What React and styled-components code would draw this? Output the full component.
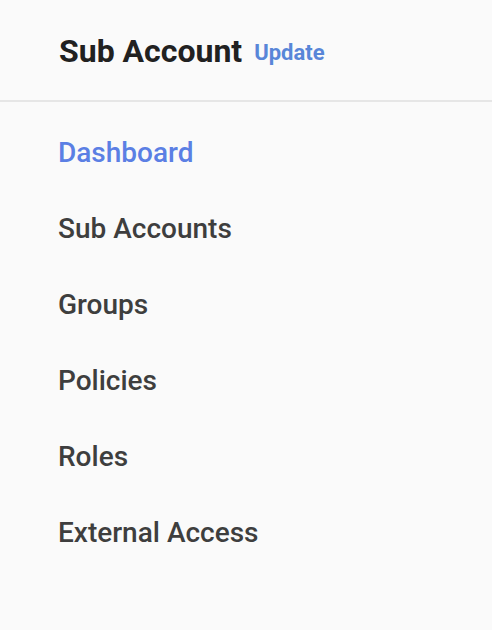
import styled, { createGlobalStyle } from 'styled-components';

const GlobalStyle = createGlobalStyle`
  html, body {
    margin: 0;
    padding: 0;
    background: #fafafa;
    font-family: Roboto, "Liberation Sans", sans-serif;
  }
`;

const Sidebar = styled.aside`
  width: 492px;
  min-height: 630px;
  background: #fafafa;
`;

const Header = styled.header`
  display: flex;
  align-items: flex-start;
  gap: 12px;
  height: 102px;
  box-sizing: border-box;
  padding: 32px 59px 0;
  border-bottom: 2px solid #e6e6e6;

  > h1 {
    margin: 0;
    font-size: 32px;
    font-weight: 700;
    color: #212121;
  }
`;

const UpdateLink = styled.a`
  margin-top: 8px;
  font-size: 22px;
  font-weight: 700;
  color: #5886d8;
  text-decoration: none;
  cursor: pointer;
`;

const Nav = styled.ul`
  list-style: none;
  margin: 0;
  padding: 12px 0 0 58px;
`;

const NavItem = styled.li`
  height: 76px;
  display: flex;
  align-items: center;
  font-size: 28px;
  font-weight: 500;
  color: ${({ $active }) => ($active ? '#5b7fe4' : '#3e3e3e')};
  cursor: pointer;
`;

const links = ['Dashboard', 'Sub Accounts', 'Groups', 'Policies', 'Roles', 'External Access'];

function App() {
  return (
    <>
      <GlobalStyle />
      <Sidebar>
        <Header>
          <h1>Sub Account</h1>
          <UpdateLink>Update</UpdateLink>
        </Header>
        <Nav>
          {links.map((label, i) => (
            <NavItem key={label} $active={i === 0}>{label}</NavItem>
          ))}
        </Nav>
      </Sidebar>
    </>
  );
}

export default App;
